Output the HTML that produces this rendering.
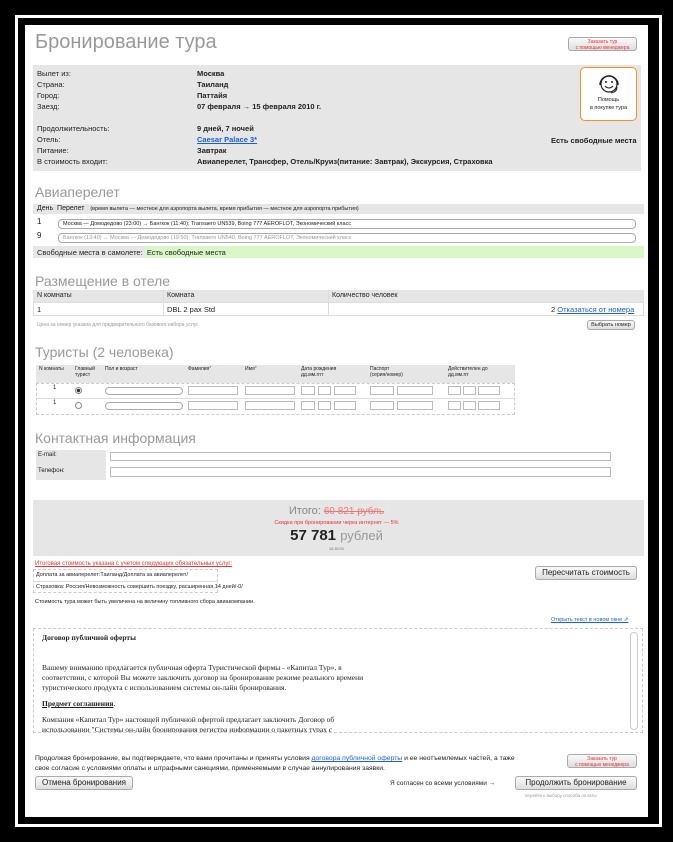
<!DOCTYPE html>
<html><head><meta charset="utf-8"><style>
*{margin:0;padding:0;box-sizing:border-box}
body{width:673px;height:842px;background:#000;position:relative;overflow:hidden;font-family:"Liberation Sans",sans-serif;font-size:7px;color:#222}
.a{position:absolute;white-space:nowrap}
.dot{background:#ececec;background-image:radial-gradient(#d4d4d4 0.6px,transparent 0.7px);background-size:2px 2px}
.h{color:#999;font-size:14px}
.btn{position:absolute;border:1px solid #aaa;border-radius:3px;background:linear-gradient(#fafafa,#ddd);font-size:9px;text-align:center;color:#222}
.sel{position:absolute;border:1px solid #aaa;border-radius:4px;background:#fff;font-size:5.5px;padding-left:4px;line-height:8px;height:10px}
.inp{position:absolute;border:1px solid #bbb;background:#fff}
.red{color:#e33}
a,.lnk{color:#1a5fd6;text-decoration:underline}
</style></head><body>
<div class="a" style="left:15px;top:15px;width:647px;height:812px;border:3px solid #fff;"></div>
<div class="a" style="left:25px;top:25px;width:623px;height:792px;background:#fff"></div>

<div class="a" style="left:35px;top:31px;font-size:20px;color:#999">Бронирование тура</div>
<div class="btn dot red" style="left:568px;top:37px;width:69px;height:14px;font-size:5px;line-height:6px;padding-top:1px">Заказать тур<br>с помощью менеджера</div>

<div class="a dot" style="left:33px;top:65px;width:608px;height:106px"></div>
<div class="a" style="left:37px;top:68px;line-height:11px;font-size:7.5px">Вылет из:<br>Страна:<br>Город:<br>Заезд:<br><br>Продолжительность:<br>Отель:<br>Питание:<br>В стоимость входит:</div>
<div class="a" style="left:197px;top:68px;line-height:11px;font-size:7.5px;font-weight:bold">Москва<br>Таиланд<br>Паттайя<br>07 февраля → 15 февраля 2010 г.<br><br>9 дней, 7 ночей<br><span class="lnk">Caesar Palace 3*</span><br>Завтрак<br>Авиаперелет, Трансфер, Отель/Круиз(питание: Завтрак), Экскурсия, Страховка</div>
<div class="a" style="left:551px;top:136px;font-size:7.5px;font-weight:bold">Есть свободные места</div>
<div class="a" style="left:580px;top:67px;width:57px;height:54px;border:1.5px solid #f7901e;border-radius:5px;background:#fff;text-align:center;font-size:5.5px;line-height:8px;padding-top:28px">Помощь<br>в покупке тура</div>
<svg class="a" style="left:595px;top:71px" width="28" height="26" viewBox="0 0 28 26"><circle cx="14" cy="13" r="8" fill="none" stroke="#222" stroke-width="1.2"/><circle cx="11" cy="11" r="1" fill="#222"/><circle cx="17" cy="11" r="1" fill="#222"/><path d="M10 15q4 4 8 0" fill="none" stroke="#222"/><path d="M5 14a9 9 0 0 1 18 0" fill="none" stroke="#222" stroke-width="1.5"/><path d="M22 16q0 5-6 6" fill="none" stroke="#222"/></svg>

<div class="a h" style="left:35px;top:184px">Авиаперелет</div>
<div class="a dot" style="left:33px;top:204px;width:611px;height:10px"></div>
<div class="a" style="left:37px;top:205px;font-size:7px">День &nbsp;Перелет &nbsp;&nbsp;<span style="font-size:5.5px">(время вылета — местное для аэропорта вылета, время прибытия — местное для аэропорта прибытия)</span></div>
<div class="a" style="left:37px;top:217px;font-size:8px">1</div>
<div class="sel" style="left:58px;top:219px;width:578px">Москва — Домодедово (23:00) → Бангкок (11:40); Transaero UN539, Boing 777 AEROFLOT, Экономический класс</div>
<div class="a" style="left:37px;top:231px;font-size:8px">9</div>
<div class="sel" style="left:58px;top:233px;width:578px;color:#999">Бангкок (13:40) → Москва — Домодедово (19:50); Transaero UN540, Boing 777 AEROFLOT, Экономический класс</div>
<div class="a dot" style="left:33px;top:246px;width:112px;height:12px"></div>
<div class="a" style="left:145px;top:246px;width:499px;height:12px;background:#d9f7c8"></div>
<div class="a" style="left:37px;top:248px;font-size:7.5px">Свободные места в самолете: &nbsp;Есть свободные места</div>

<div class="a h" style="left:35px;top:273px">Размещение в отеле</div>
<div class="a dot" style="left:33px;top:290px;width:611px;height:12px"></div>
<div class="a" style="left:33px;top:302px;width:611px;height:14px;border:1px solid #ddd;background:#fff"></div>
<div class="a" style="left:163px;top:290px;width:1px;height:26px;background:#ddd"></div>
<div class="a" style="left:328px;top:290px;width:1px;height:26px;background:#ddd"></div>
<div class="a" style="left:37px;top:292px;font-size:7px">N комнаты</div>
<div class="a" style="left:167px;top:292px;font-size:7px">Комната</div>
<div class="a" style="left:332px;top:292px;font-size:7px">Количество человек</div>
<div class="a" style="left:37px;top:305px;font-size:7.5px">1</div>
<div class="a" style="left:167px;top:305px;font-size:7.5px">DBL 2 pax Std</div>
<div class="a" style="left:551px;top:305px;font-size:7.5px">2 <span class="lnk">Отказаться от номера</span></div>
<div class="a" style="left:37px;top:322px;font-size:5px;color:#999">Цена за номер указана для предварительного базового набора услуг.</div>
<div class="btn" style="left:587px;top:320px;width:48px;height:10px;font-size:5.5px;line-height:8px">Выбрать номер</div>

<div class="a h" style="left:35px;top:344px">Туристы (2 человека)</div>
<div class="a dot" style="left:36px;top:365px;width:479px;height:18px"></div>
<div class="a" style="left:36px;top:383px;width:479px;height:32px;border:1px dashed #ccc;background:#fff"></div>
<div class="a" style="left:36px;top:398px;width:479px;height:1px;background:#ddd"></div>
<div class="a" style="left:39px;top:366px;font-size:5px;line-height:6px">N комнаты</div>
<div class="a" style="left:75px;top:366px;font-size:5px;line-height:6px">Главный<br>турист</div>
<div class="a" style="left:105px;top:366px;font-size:5px;line-height:6px">Пол и возраст</div>
<div class="a" style="left:188px;top:366px;font-size:5px;line-height:6px">Фамилия<span class="red">*</span></div>
<div class="a" style="left:245px;top:366px;font-size:5px;line-height:6px">Имя<span class="red">*</span></div>
<div class="a" style="left:301px;top:366px;font-size:5px;line-height:6px">Дата рождения<br>дд.мм.гггг</div>
<div class="a" style="left:370px;top:366px;font-size:5px;line-height:6px">Паспорт<br>(серия/номер)</div>
<div class="a" style="left:448px;top:366px;font-size:5px;line-height:6px">Действителен до<br>дд.мм.ггг</div>
<div class="a" style="left:53px;top:385px;font-size:6px">1</div>
<div class="a" style="left:53px;top:400px;font-size:6px">1</div>
<div class="a" style="left:75px;top:387px;width:7px;height:7px;border:1px solid #888;border-radius:50%;background:radial-gradient(#333 1.5px,transparent 2px)"></div>
<div class="a" style="left:75px;top:402px;width:7px;height:7px;border:1px solid #888;border-radius:50%"></div>
<div class="sel" style="left:105px;top:387px;width:78px;height:8px"></div>
<div class="sel" style="left:105px;top:402px;width:78px;height:8px"></div>
<div class="inp" style="left:188px;top:386px;width:50px;height:9px"></div><div class="inp" style="left:188px;top:401px;width:50px;height:9px"></div>
<div class="inp" style="left:245px;top:386px;width:50px;height:9px"></div><div class="inp" style="left:245px;top:401px;width:50px;height:9px"></div>
<div class="inp" style="left:301px;top:386px;width:14px;height:9px"></div><div class="inp" style="left:318px;top:386px;width:13px;height:9px"></div><div class="inp" style="left:334px;top:386px;width:22px;height:9px"></div>
<div class="inp" style="left:301px;top:401px;width:14px;height:9px"></div><div class="inp" style="left:318px;top:401px;width:13px;height:9px"></div><div class="inp" style="left:334px;top:401px;width:22px;height:9px"></div>
<div class="inp" style="left:370px;top:386px;width:24px;height:9px"></div><div class="inp" style="left:397px;top:386px;width:36px;height:9px"></div>
<div class="inp" style="left:370px;top:401px;width:24px;height:9px"></div><div class="inp" style="left:397px;top:401px;width:36px;height:9px"></div>
<div class="inp" style="left:448px;top:386px;width:13px;height:9px"></div><div class="inp" style="left:463px;top:386px;width:13px;height:9px"></div><div class="inp" style="left:478px;top:386px;width:22px;height:9px"></div>
<div class="inp" style="left:448px;top:401px;width:13px;height:9px"></div><div class="inp" style="left:463px;top:401px;width:13px;height:9px"></div><div class="inp" style="left:478px;top:401px;width:22px;height:9px"></div>

<div class="a h" style="left:35px;top:430px">Контактная информация</div>
<div class="a dot" style="left:36px;top:450px;width:70px;height:30px"></div>
<div class="a" style="left:38px;top:452px;font-size:6px">E-mail:</div>
<div class="a" style="left:38px;top:468px;font-size:6px">Телефон:</div>
<div class="inp" style="left:110px;top:452px;width:501px;height:9px"></div>
<div class="inp" style="left:110px;top:467px;width:501px;height:10px"></div>

<div class="a dot" style="left:33px;top:500px;width:611px;height:56px"></div>
<div class="a" style="left:0;top:505px;width:673px;text-align:center;font-size:11px;color:#888">Итого: <span style="color:#e77;text-decoration:line-through;font-size:10px">60 821 рубль</span></div>
<div class="a" style="left:0;top:520px;width:673px;text-align:center;font-size:5.5px"><span class="red">Скидка при бронировании через интернет — 5%</span></div>
<div class="a" style="left:0;top:527px;width:673px;text-align:center;font-size:15px;font-weight:bold">57 781 <span style="font-weight:normal;color:#999;font-size:13px">рублей</span></div>
<div class="a" style="left:0;top:546px;width:673px;text-align:center;font-size:4.5px;color:#888">за всех</div>

<div class="a red" style="left:35px;top:561px;font-size:6px;text-decoration:underline">Итоговая стоимость указана с учетом следующих обязательных услуг:</div>
<div class="a" style="left:33px;top:569px;width:185px;height:24px;border:1px dashed #ccc"></div>
<div class="a" style="left:33px;top:581px;width:185px;height:1px;background:#ddd"></div>
<div class="a" style="left:36px;top:572px;font-size:5.5px">Доплата за авиаперелет:Таиланд/Доплата за авиаперелет/</div>
<div class="a" style="left:36px;top:584px;font-size:5.5px">Страховка: Россия/Невозможность совершить поездку, расширенная,14 дней/-0/</div>
<div class="btn" style="left:535px;top:566px;width:102px;height:14px;font-size:8px;line-height:12px">Пересчитать стоимость</div>
<div class="a" style="left:35px;top:599px;font-size:5.5px">Стоимость тура может быть увеличена на величину топливного сбора авиакомпании.</div>
<div class="a lnk" style="left:551px;top:617px;font-size:5.5px">Открыть текст в новом окне ⇗</div>

<div class="a" style="left:33px;top:628px;width:610px;height:105px;border:1px dashed #ccc;background:#fff;overflow:hidden;font-family:'Liberation Serif',serif;font-size:7.5px;line-height:10px;padding:4px 8px;white-space:normal">
<b>Договор публичной оферты</b><br><br><br>
<div style="width:330px">Вашему вниманию предлагается публичная оферта Туристической фирмы - «Капитал Тур», в соответствии, с которой Вы можете заключить договор на бронирование режиме реального времени туристического продукта с использованием системы он-лайн бронирования.</div>
<div style="margin-top:6px"><b><u>Предмет соглашения</u></b>.</div>
<div style="width:330px;margin-top:6px">Компания «Капитал Тур» настоящей публичной офертой предлагает заключить Договор об использовании "Системы он-лайн бронирования регистра информации о пакетных турах с</div>
</div>
<div class="a" style="left:630px;top:632px;width:8px;height:98px;border:1px solid #ccc;border-radius:4px"></div>

<div class="a" style="left:35px;top:754px;font-size:6.8px;line-height:10px">Продолжая бронирование, вы подтверждаете, что вами прочитаны и приняты условия <span class="lnk">договора публичной оферты</span> и ее неотъемлемых частей, а таже<br>свое согласие с условиями оплаты и штрафными санкциями, применяемыми в случае аннулирования заявки.</div>
<div class="btn dot red" style="left:567px;top:754px;width:70px;height:14px;font-size:5px;line-height:6px;padding-top:1px">Заказать тур<br>с помощью менеджера</div>
<div class="btn" style="left:35px;top:776px;width:98px;height:14px;font-size:8px;line-height:12px">Отмена бронирования</div>
<div class="a" style="left:390px;top:780px;font-size:6.5px">Я согласен со всеми условиями →</div>
<div class="btn" style="left:515px;top:776px;width:122px;height:14px;font-size:8px;line-height:12px">Продолжить бронирование</div>
<div class="a" style="left:525px;top:793px;font-size:4.5px;color:#999">перейти к выбору способа оплаты</div>
</body></html>
